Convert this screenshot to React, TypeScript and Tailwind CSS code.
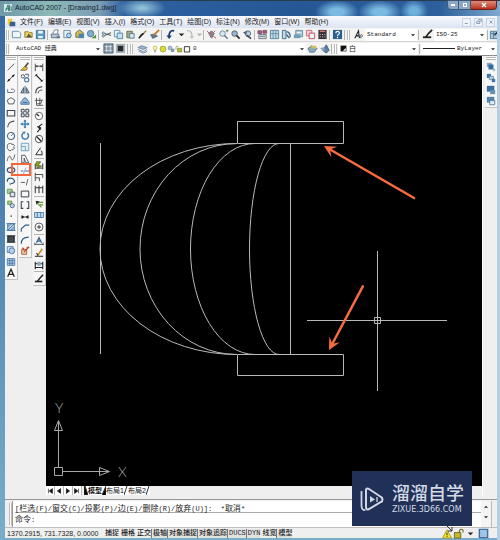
import type { ReactNode } from "react";
import clsx from "clsx";

const BLUE = "#3f74a8";
const DARK = "#3c4650";
const GREEN = "#5f9a2c";
const YELLOW = "#e2c02c";

// 12x12 glyphs, strokes are inherited from <Icon>
const GLYPHS: Record<string, ReactNode> = {
  // standard
  new: <path d="M1.5 2.5h7l2 2v5h-9z" fill="#eef6fb" stroke="#5d93ac" />,
  open: <><path d="M2 3h4l1 1h3v5H2z" fill="#efd35a" stroke="#8b7a3a" /><path d="M4 9l2-4 4 4z" fill="#4c5b4a" stroke="none" /></>,
  save: <><path d="M1.5 1.5h9v9h-9z" fill="#5a9bc8" stroke="#3c6f98" /><path d="M3.5 2h5v3h-5zM3.5 7.500h5V10h-5z" fill="#edf4fa" stroke="none" /></>,
  plot: <><path d="M3 5L5 1h4L8 5" fill="#fff" stroke="#708090" /><path d="M1.500 5.500h8v4h-8z" fill="#b8c6d2" stroke="#5c7288" /><path d="M7 8h4v2H7z" fill="#607990" stroke="none" /></>,
  preview: <><path d="M2 1.500h7v8H2z" fill="#e3f0f8" stroke="#668ca8" /><circle cx="7.500" cy="7" r="2.500" fill="#b8d8ea" stroke="#43749c" /></>,
  publish: <><path d="M2 4l4-3 4 3v5H2z" fill="#d8bd4c" stroke="#6d6c4c" /><path d="M5 5h6v5H5z" fill="#4c86ad" stroke="none" /></>,
  globe: <><circle cx="5" cy="5" r="3.500" fill="#7daecb" stroke="#487899" /><path d="M6 10l5-4v4z" fill="#4d9038" stroke="none" /></>,
  cut: <><path d="M11 4L4 7M11 7L4 5" stroke={DARK} /><circle cx="2.500" cy="4.500" r="1.200" stroke="#53708a" /><circle cx="2.500" cy="7.500" r="1.200" stroke="#53708a" /></>,
  copyDoc: <><path d="M1.500 1.500h6v7h-6z" fill="#e8f4fa" stroke="#5c91ae" /><path d="M4.500 4.500h6v6h-6z" fill="#c9e1f0" stroke="#4d83a4" /></>,
  paste: <><path d="M2 2.500h6v7H2z" fill="#9fae8e" stroke="#64714c" /><path d="M5 5h5v5H5z" fill="#d8e6ef" stroke="#5c7b92" /></>,
  match: <><path d="M10 2L6 6" stroke="#8e8464" strokeWidth="1.500" /><path d="M7 5L2 10l3-4z" fill="#222" stroke="#222" strokeWidth="1.500" /></>,
  block: <><path d="M1 6l5-1 4 3-6 3z" fill="#587592" stroke="none" /><path d="M11 1L5 7" stroke="#c67b29" strokeWidth="2" /></>,
  undo: <><path d="M10 2C6 1 4 4 4.500 9" stroke="#1f3e75" strokeWidth="2" /><path d="M1.500 7h6l-3 4z" fill="#1f3e75" stroke="none" /></>,
  redo: <><path d="M2 2c4-1 6 2 5.500 7" stroke="#bcc1c8" strokeWidth="1.500" /><path d="M5 8h5l-2.500 3z" fill="#bcc1c8" stroke="none" /></>,
  pan: <><path d="M3 5l3-3 3 3-3 5z" fill="#9a7f84" stroke="#6a6f88" /><path d="M1 2l3 3M8 8l3 2M10 2L8 4" stroke="#b9485a" /></>,
  zoomRt: <><circle cx="5" cy="5" r="3" fill="#d7e8f1" stroke="#71899d" /><path d="M7 7l3.500 3.500" stroke="#556b80" strokeWidth="1.500" /><path d="M8.500 2h3M10 .5v3" stroke="#5c7f4c" /></>,
  zoomWin: <><circle cx="5" cy="5" r="3" fill="#9fb6c8" stroke="#4c6278" /><path d="M7 7l3.500 3.500" stroke="#333" strokeWidth="2" /></>,
  zoomPrev: <><circle cx="6.500" cy="5" r="3" fill="#bccdd6" stroke="#54697d" /><path d="M5 7l5 3.500" stroke="#33404d" strokeWidth="1.500" /><path d="M1 4l4-2v4z" fill="#3d5c80" stroke="none" /></>,
  props: <><path d="M1 2h4v3H1zM6.500 1.500h4v3h-4z" fill="#b35272" stroke="#76506c" /><path d="M2 6h8v4.500H2z" fill="#e1d9d2" stroke="#697689" /><path d="M3 8h6" stroke="#5a7a96" /></>,
  center: <><path d="M1.500 1.500h9v9h-9z" fill="#c5dbe6" stroke="#4e819c" /><path d="M4.500 2v8M7.500 2v8M2 5h8" stroke="#5d92ab" /></>,
  tools: <><path d="M1.500 1.500h4v9h-4z" fill="#c7dbe7" stroke="#3b698c" /><path d="M6 3c3 0 4 2 4 6M6 6l3 4" stroke="#406a88" strokeWidth="1.500" /></>,
  sheet: <><path d="M3 1.500h7.500v7H3z" fill="#a7c6d4" stroke="#6a93a6" /><path d="M1 6h7v4H1z" fill="#6f9db5" stroke="none" /><path d="M4 4h5" stroke="#fff" /></>,
  markup: <><path d="M1.500 1.500h6v6h-6z" fill="#f7d6d9" stroke="#cf6475" /><path d="M4.500 4.500h6v6h-6z" fill="#f2f2f4" stroke="#c04c62" /></>,
  calc: <><path d="M1.500 1h9v10h-9z" fill="#3b3035" stroke="none" /><path d="M3 2.500h6" stroke="#cf7a78" strokeWidth="1.500" /><path d="M3 6h6M3 8.500h6" stroke="#e0dcdc" strokeDasharray="1 1.500" /></>,
  help: <><path d="M1 1h10v10H1z" fill="#2a6190" stroke="none" /><path d="M4.200 4.500C4.200 2 8 2 8 4.300 8 6 6 5.700 6 7.500M6 8.500V10" stroke="#fff" strokeWidth="1.300" /></>,
  textStyle: <><path d="M2 10L6 2l1 8M3.500 7.500H7" stroke="#222" strokeWidth="1.200" /><path d="M8 8c0-3 3-2 2 0s-3 2-2 0" stroke="#39526f" /></>,
  dimStyle: <><path d="M1 9h9" stroke="#222" strokeWidth="2" /><path d="M11 1L7 5 4 9" stroke="#222" strokeWidth="1.800" /></>,
  tableStyle: <><path d="M1.500 2.500h9v8h-9z" fill="#aac7dd" stroke="#4e7da0" /><path d="M2 5h8M5 3v7" stroke="#4e7da0" /><path d="M11 1L6 7" stroke="#333" strokeWidth="1.500" /></>,
  // workspace and layers
  workspace: <><path d="M1 1h10v10H1z" fill="#8295a6" stroke="#51667a" /><path d="M2 4h8M2 8h8M4 2v8M8 2v8" stroke="#cfd9e2" /></>,
  wsSave: <><path d="M1 1h10v10H1z" fill="#aab3ba" stroke="none" /><path d="M3 3h6v6H3z" fill="#26292c" stroke="none" /></>,
  layers: <><path d="M1 5l4-2 6 2-4 2z" fill="#9db5ca" stroke="#6c8aa6" /><path d="M1 7l6 2.500L11 7M2 9l5 2 4-2" stroke="#6788a8" /></>,
  bulb: <><circle cx="6" cy="4.500" r="3" fill="#fdf5a2" stroke="#b2a658" /><path d="M5 8h2v3H5z" fill="#7a7a70" stroke="none" /></>,
  sun: <circle cx="6" cy="6" r="4.500" fill="#d9dc35" stroke="#8b8f2e" />,
  freeze: <><circle cx="4.500" cy="4.500" r="3" fill="#a9bfd0" stroke="#6f8ba2" /><path d="M6 5.500h5v5H6z" fill="#7e9ab1" stroke="none" /></>,
  unlock: <><path d="M1.500 7V3.500C1.500 1 5 1 5 3.500" stroke="#95a03b" strokeWidth="1.300" /><path d="M4 5h6v5.500H4z" fill="#b7c23e" stroke="#798123" /></>,
  square: <path d="M2 2.500h8v8H2z" fill="#fff" stroke="#222" strokeWidth="1.300" />,
  layerCur: <><path d="M1 6l4-3 6 3-3 4H3z" fill="#87a9bf" stroke="#5a8098" /><path d="M4 3h6v3H5z" fill="#cdbf5a" stroke="none" /></>,
  layerPrev: <><path d="M4 8l4-6 3 6-3 3z" fill="#5f80a5" stroke="#39587c" /><path d="M1 6l5-2v5z" fill="#85a5c1" stroke="none" /></>,
  bw: <><path d="M1 1h10v10H1z" fill="#111" stroke="none" /><path d="M5 10l5-5v5z" fill="#fff" stroke="none" /></>,
  // draw
  line: <path d="M2 10L10 2" stroke={DARK} />,
  xline: <><path d="M1.500 10.500l9-9" stroke={DARK} /><path d="M2.500 9.500l2-2M7.500 4.500l2-2" stroke="#111" strokeWidth="2" /></>,
  pline: <path d="M2 9h6c3 0 3-4 0-4H6M2 5v4" stroke="#46627e" />,
  polygon: <path d="M6 2l4.500 3L9 9.500H3L1.500 5z" stroke={DARK} />,
  rect: <path d="M1.500 3h9v6.500h-9z" stroke={DARK} strokeWidth="1.300" />,
  arc: <path d="M2 10C2 5 6 2.500 10 2.500" stroke={DARK} strokeWidth="1.300" />,
  circle: <><circle cx="6" cy="6" r="4.200" stroke="#44668a" strokeWidth="1.300" /><path d="M6 6l3-3" stroke="#44668a" /></>,
  cloud: <path d="M4 2c2-1 3 0 3 1 3-1 4 2 2 3 2 2 0 4-2 3-1 2-4 2-4 0-2-1-2-3-1-4-1-1 0-3 2-3z" stroke={DARK} />,
  spline: <path d="M1.500 9.500C3 1 6 4 6 6s3 5 4.500-4" stroke={DARK} />,
  ellipse: <ellipse cx="6" cy="6" rx="4.500" ry="3" stroke="#2f5680" strokeWidth="1.500" />,
  ellipseArc: <><path d="M2 7C0 3 6 1 9 4s0 5-3 5" stroke="#315b82" strokeWidth="1.500" /><path d="M5 8v3" stroke="#315b82" /></>,
  insert: <><path d="M1.500 1.500h6v5h-6z" fill="#a9c7b8" stroke={GREEN} /><path d="M5 5h5.500v5.500H5z" fill="#d6e4ea" stroke={DARK} /></>,
  makeBlock: <><path d="M2 2.500h5v4H2z" fill="#9ec3a1" stroke={GREEN} /><circle cx="7.500" cy="8" r="2.500" fill="#c9d9e4" stroke="#3c5f80" /></>,
  point: <path d="M5.500 5.500h1.500V7H5.500z" fill="#222" stroke="none" />,
  hatch: <><path d="M2 2h8v8H2z" fill="#b7d0e4" stroke={BLUE} /><path d="M2 6l4-4M2 10l8-8M6 10l4-4M.5 2h11M.5 10h11" stroke={BLUE} /></>,
  gradient: <><path d="M2 2h8v8H2z" fill="#31383e" stroke="#20262b" /><path d="M.5 2h11M.5 10h11M4 5h4v3H4z" stroke="#59626a" /></>,
  region: <><path d="M1.500 2h7v7h-7z" fill="#dbe8f2" stroke={BLUE} /><circle cx="7" cy="7" r="3.500" fill="#b4cde0" stroke={BLUE} /></>,
  table: <><path d="M1.500 2h9v8h-9z" fill="#bdd7ea" stroke={BLUE} /><path d="M2 4.500h8M2 7.500h8M4.500 2v8M7.500 2v8" stroke={BLUE} /></>,
  mtext: <path d="M2 10.500L6 1.500l4 9M3.500 7.500h5" stroke="#222" strokeWidth="1.500" />,
  // modify
  erase: <><path d="M1 10h6l2-3-3-2z" fill={YELLOW} stroke="#74683d" /><path d="M6 6l4-5" stroke="#5a4630" strokeWidth="2" /></>,
  copy: <><circle cx="3.500" cy="4" r="2" stroke={DARK} /><circle cx="8" cy="8" r="2.500" stroke={BLUE} strokeWidth="1.300" /><path d="M6 1.500h4v3" stroke={DARK} /></>,
  mirror: <><path d="M4.500 3v6.500H1zM7.500 3v6.500H11z" stroke={DARK} fill="#a6bac9" /><path d="M6 1v10" stroke={BLUE} /></>,
  offset: <><path d="M1 10V7c2 0 2-5 5-5s3 5 5 5v3z" fill="#93b7d3" stroke={BLUE} /><path d="M3 8h6" stroke="#315b82" /></>,
  array: <path d="M1.500 1.500h3.500v3.500H1.500zM7 1.500h3.500v3.500H7zM1.500 7h3.500v3.500H1.500zM7 7h3.500v3.500H7z" stroke={DARK} strokeWidth="1.200" />,
  move: <><path d="M6 2v8M2 6h8" stroke="#2f74b1" strokeWidth="1.500" /><path d="M6 .5L8 3H4zM6 11.500L8 9H4zM.5 6L3 4v4zM11.500 6L9 4v4z" fill="#2f74b1" stroke="none" /></>,
  rotate: <><path d="M4 2.500a4 4 0 1 0 4.500 0" stroke="#3c79ab" strokeWidth="1.700" /><path d="M3 1l4-.5L5 4z" fill="#3c79ab" stroke="none" /></>,
  scale: <><path d="M1.500 1.500h9v9h-9z" fill="#e4eef5" stroke="#6796b8" /><path d="M1.500 5.500h5v5" stroke="#6796b8" /></>,
  stretch: <path d="M2 1.500h4l4.500 9H7L5 5v5.500H2z" stroke={DARK} />,
  trim: <><path d="M1 6h3M6 6h5" stroke={BLUE} strokeWidth="1.300" /><path d="M7 2L4 10" stroke="#7ea4c4" /></>,
  extend: <path d="M1 6.500h5M9.500 2.500L7.500 10" stroke={DARK} />,
  breakPt: <path d="M1.500 2.500h9v7h-9z" stroke={DARK} strokeWidth="1.200" />,
  break: <path d="M4 2H1.500v8H4M8 2h2.500v8H8" stroke={DARK} strokeWidth="1.300" />,
  join: <><path d="M1 6h10" stroke={DARK} /><path d="M2 3.500L5.500 6 2 8.500zM10 3.500L6.500 6 10 8.500z" fill="#222" stroke="none" /></>,
  chamfer: <path d="M1.500 10.500V7l5-4.500H11" stroke="#345f87" strokeWidth="1.300" />,
  fillet: <path d="M1.500 10.500C1.500 5 4 2.500 10.500 2.500" stroke="#345f87" strokeWidth="1.300" />,
  explode: <><path d="M2 4h6v6H2z" fill="#eac6a3" stroke="#ab5632" /><path d="M5 7l5-5M8 2.500l3-1.500M3 2l2 3" stroke="#c23a22" strokeWidth="1.500" /></>,
  // dimension
  dimLinear: <><path d="M1.500 2v9M10.500 2v9M2 5h8" stroke="#333" /><path d="M2 5l2-1.500v3zM10 5L8 3.500v3z" fill="#222" stroke="none" /></>,
  dimAligned: <><path d="M2 2l8 8" stroke="#222" strokeWidth="1.500" /><path d="M1 4l3-3M8 11l3-3" stroke="#333" /></>,
  dimArc: <><path d="M2 10C2 4 5 2 10 2" stroke="#333" strokeWidth="1.300" /><path d="M5 10c0-3 2-4 5-4" stroke="#333" /></>,
  dimOrd: <path d="M3 1v9h8M1 4h9M7 1v9M4 8h4l2-5" stroke="#444" />,
  dimRadius: <><circle cx="6" cy="6" r="4.500" stroke="#555" /><path d="M6 6L3 3.500" stroke="#222" strokeWidth="1.500" /></>,
  dimJog: <path d="M10 1L6 4l2 2-4 5M4 4l4 4" stroke="#222" strokeWidth="1.300" />,
  dimDia: <><circle cx="6" cy="6" r="4.500" stroke="#444" /><path d="M3 3l6 6" stroke="#222" strokeWidth="1.500" /></>,
  dimAng: <path d="M10.500 10.500H2L8 2M8 5c1.500 1 2 3 1.500 5" stroke="#333" strokeWidth="1.200" />,
  dimQuick: <><path d="M1.500 10V3M10.500 10V3M2 8.500h8" stroke="#333" strokeWidth="1.200" /><path d="M3 1h5L5 5l4 1-5 3 1-3H2z" fill="#9ba326" stroke="#566b24" /></>,
  dimBase: <path d="M1.500 1v10M1.500 3h9v4M1.500 7h5v4" stroke="#333" />,
  dimCont: <path d="M1.500 2v9M6 2v9M10.500 2v9M1.500 4.500h9" stroke="#333" strokeWidth="1.200" />,
  leader: <><path d="M2 2l5 1-4 4z" fill="#222" stroke="none" /><path d="M4 5l5 5M6 4h5M7 7h4" stroke={GREEN} strokeWidth="1.500" /></>,
  tolerance: <><path d="M.5 3h11v6H.5z" fill="#c2d9ea" stroke={BLUE} /><path d="M4 3v6M8 3v6" stroke={BLUE} /></>,
  centerMark: <><circle cx="6" cy="6" r="4.800" stroke="#444" /><path d="M3.500 6h5M6 3.500v5" stroke="#222" /></>,
  dimEdit: <><path d="M3 8l3-6 3 6M4 6h4" stroke="#2d5d8c" strokeWidth="1.500" /><path d="M1 10h10M1 8v3M11 8v3" stroke="#333" /></>,
  dimTedit: <><path d="M10 1L5 8" stroke="#c2912d" strokeWidth="2" /><path d="M1 10h10M3 6l2 3" stroke="#222" strokeWidth="1.300" /></>,
  dimUpdate: <><path d="M1.500 2v9M10.500 2v9M2 4.500h8M2 9h8" stroke="#222" strokeWidth="1.300" /><path d="M4 2h4v5H4z" fill="#8ba8c0" stroke="none" /></>,
  // draw order
  front: <><path d="M1 1h6v5H1z" fill="#8aa0b4" stroke="none" /><path d="M3 3h6v6H3z" fill="#2f6ba4" stroke="none" /><path d="M8 8h3v3H8z" fill="#a9b8c6" stroke="none" /></>,
  back: <><path d="M1 1h5v5H1z" fill="#3e77ab" stroke="none" /><path d="M4 4h5v4H4z" fill="#b8cad9" stroke="#6c8aa6" /><path d="M7 7h4v4H7z" fill="#3e77ab" stroke="none" /></>,
  above: <><path d="M1 1h9v7H1z" fill="#3a6f9f" stroke="none" /><path d="M5 6h6v5H5z" fill="#6690b3" stroke="none" /></>,
  under: <><path d="M1 1h9v7H1z" fill="#5583ad" stroke="none" /><path d="M4.500 5.500h6v5h-6z" fill="#e5edf4" stroke="#4c759b" /></>,
  // tray
  warn: <><path d="M5.500 2l5 9h-10z" fill="#f0e22e" stroke="#a59a2b" /><path d="M5.500 5v3M5.500 9v1" stroke="#222" /></>,
  lock: <><path d="M7 6V3c0-2 4-2 4 0v2" stroke="#77712f" strokeWidth="1.300" /><path d="M1.500 5h7v6h-7z" fill="#c4b72c" stroke="#6d661d" /></>,
  clean: <path d="M1.500 1.500h9v9h-9z" fill="#9fc4e6" stroke="#3f6f9f" strokeWidth="1.500" />,
  down: <path d="M3 5h6L6 8z" fill="#222" stroke="none" />,
};

const MENUS = [
  "文件(F)", "编辑(E)", "视图(V)", "插入(I)", "格式(O)", "工具(T)",
  "绘图(D)", "标注(N)", "修改(M)", "窗口(W)", "帮助(H)",
];

const STANDARD = [
  ["new", "open", "save"],
  ["plot", "preview", "publish", "globe"],
  ["cut", "copyDoc", "paste", "match", "block"],
];
const VIEW = [
  ["pan", "zoomRt", "zoomWin", "zoomPrev"],
  ["props", "center", "tools", "sheet", "markup", "calc"],
  ["help"],
];

const DRAW = [
  "line", "xline", "pline", "polygon", "rect", "arc", "circle", "cloud", "spline", "ellipse",
  "ellipseArc", "insert", "makeBlock", "point", "hatch", "gradient", "region", "table", "mtext",
];
const MODIFY = [
  "erase", "copy", "mirror", "offset", "array", "move", "rotate", "scale", "stretch", "trim",
  "extend", "breakPt", "break", "join", "chamfer", "fillet", "explode",
];
const DIMENSION = [
  "dimLinear", "dimAligned", "dimArc", "dimOrd", "-",
  "dimRadius", "dimJog", "dimDia", "dimAng", "-",
  "dimQuick", "dimBase", "dimCont", "-",
  "leader", "tolerance", "centerMark", "-",
  "dimEdit", "dimTedit", "dimUpdate", "-", "dimStyle",
];

const MODES = [
  { label: "捕捉", on: false },
  { label: "栅格", on: false },
  { label: "正交", on: false },
  { label: "极轴", on: true },
  { label: "对象捕捉", on: true },
  { label: "对象追踪", on: true },
  { label: "DUCS", on: true },
  { label: "DYN", on: true },
  { label: "线宽", on: false },
  { label: "模型", on: true },
];

function Icon({ name, className = "size-[11px]" }: { name: string; className?: string }) {
  return (
    <svg viewBox="0 0 12 12" fill="none" strokeWidth="1" className={clsx("shrink-0", className)} aria-hidden="true">
      {GLYPHS[name]}
    </svg>
  );
}

function Tool({ name, className = "w-3" }: { name: string; className?: string }) {
  return (
    <button type="button" aria-label={name} className={clsx("flex shrink-0 items-center justify-center", className)}>
      <Icon name={name} />
    </button>
  );
}

function Grip() {
  return <span className="mx-px h-2.5 w-[3px] shrink-0 border-x border-[#bdbdbd] bg-white" />;
}

function Sep() {
  return <span className="mx-px h-2.5 w-px shrink-0 bg-[#b4b4b4]" />;
}

function Groups({ groups }: { groups: string[][] }) {
  return groups.map((group, i) => (
    <div key={i} className="flex items-center">
      {group.map((name) => <Tool key={name} name={name} />)}
      <Sep />
    </div>
  ));
}

type ComboProps = { label: string; value: string; className: string; mono?: boolean; children?: ReactNode };

function Combo({ label, value, className, mono = true, children }: ComboProps) {
  return (
    <label className={clsx("flex h-3 items-center overflow-hidden bg-white", className)}>
      {children}
      <select
        aria-label={label}
        className={clsx(
          "min-w-0 flex-1 appearance-none bg-transparent pl-0.5 leading-3 text-[#222] outline-none",
          mono ? "font-['Liberation_Mono','Noto_Sans_CJK_SC',monospace] text-[6px]" : "text-[7px]"
        )}
      >
        <option>{value}</option>
      </select>
      <Icon name="down" className="size-2" />
    </label>
  );
}

function TitleBar() {
  return (
    <header className="flex h-4 items-center gap-[3px] bg-[radial-gradient(ellipse_24px_10px_at_142px_8px,#8fc0d6_10%,transparent),radial-gradient(ellipse_22px_12px_at_337px_12px,#7ab9e2_30%,transparent),radial-gradient(ellipse_22px_12px_at_380px_12px,#7ab9e2_30%,transparent),radial-gradient(ellipse_14px_12px_at_414px_11px,#6eb0dc_30%,transparent),linear-gradient(90deg,#6f98a8_0,#8db9b8_50px,#7b9db4_100px,#2d619f_125px,#255795_300px,#2c5f9b_440px,#7fa9d0)] pr-[3px] pl-1 shadow-[inset_0_1px_0_#2b3b4d]">
      <svg viewBox="0 0 10 10" className="size-2 shrink-0" aria-hidden="true">
        <path d="M0 0h10v10H0z" fill="#d7e9e6" />
        <path d="M2 9L5 1l1 8M2 6h4M7 1v8M9 3v6" stroke="#28736f" fill="none" strokeWidth="1.200" />
      </svg>
      <h1 className="flex-1 truncate text-[7px] leading-4 text-[#10202e]">AutoCAD 2007 - [Drawing1.dwg]</h1>
      <div className="flex h-2.5 self-start text-white">
        <button type="button" aria-label="最小化" className="flex w-3 items-center justify-center rounded-bl border border-[#3c5876] bg-[#8ba9c6]">
          <span className="h-0.5 w-1 bg-white" />
        </button>
        <button type="button" aria-label="最大化" className="flex w-3 items-center justify-center border-y border-r border-[#3c5876] bg-[#8ba9c6]">
          <span className="size-1 border border-white" />
        </button>
        <button type="button" aria-label="关闭" className="flex w-[26px] items-center justify-center rounded-br border-y border-r border-[#6b2018] bg-linear-to-b from-[#d98a7a] to-[#b92c18]">
          <svg viewBox="0 0 6 6" className="size-1.5"><path d="M1 1l4 4M5 1L1 5" stroke="#fff" strokeWidth="1.300" /></svg>
        </button>
      </div>
    </header>
  );
}

function MenuBar() {
  return (
    <nav className="flex h-3 items-center bg-linear-to-b from-[#f7f9fd] to-[#dde4f2] pl-0.5">
      <svg viewBox="0 0 12 12" className="mr-1 size-[9px]" aria-hidden="true">
        <path d="M1 1h6v8H1z" fill="#f0c93c" />
        <path d="M4 5h7v6H3z" fill="#3a5f8c" />
      </svg>
      <div className="flex flex-1 gap-[5px]">
        {MENUS.map((label) => (
          <button key={label} type="button" className="text-[7px] leading-3 whitespace-nowrap text-[#1c1c1c]">
            {label}
          </button>
        ))}
      </div>
      <div className="flex gap-[3px] pr-0.5">
        {["M1 6h4", "M1 3h4v3H1zM3 1h4v3", "M2 2l4 4M6 2L2 6"].map((d) => (
          <button key={d} type="button" aria-label="文档窗口" className="flex size-[9px] items-center justify-center border border-[#c6d2e4] bg-[#eef3fa]">
            <svg viewBox="0 0 8 8" className="size-1.5" fill="none" stroke="#6a7f9c"><path d={d} /></svg>
          </button>
        ))}
      </div>
    </nav>
  );
}

function StandardBar() {
  return (
    <div className="flex h-3.5 items-center overflow-hidden border-b border-[#d5d5d5] bg-[#f3f3f1]">
      <Grip />
      <Groups groups={STANDARD} />
      <Tool name="undo" className="w-[15px]" />
      <Tool name="down" className="w-1.5" />
      <Tool name="redo" />
      <Tool name="down" className="w-1.5 opacity-30" />
      <Sep />
      <Groups groups={VIEW} />
      <Grip />
      <Tool name="textStyle" className="w-3.5" />
      <Combo label="文字样式" value="Standard" className="w-13 shrink-0" />
      <Sep />
      <Tool name="dimStyle" className="w-3.5" />
      <Combo label="标注样式" value="ISO-25" className="min-w-13 flex-1" />
      <Sep />
      <Tool name="tableStyle" className="w-2.5" />
    </div>
  );
}

function LayerBar() {
  return (
    <div className="flex h-3.5 items-center overflow-hidden border-b border-[#8d8d8d] bg-[#f3f3f1]">
      <Grip />
      <Combo label="工作空间" value="AutoCAD 经典" className="w-23 shrink-0 pl-1" />
      <Tool name="workspace" />
      <Tool name="wsSave" />
      <Sep />
      <Grip />
      <Tool name="layers" className="w-4" />
      <Combo label="图层" value="0" className="w-39 shrink-0 pl-px">
        {["bulb", "sun", "freeze", "unlock", "square"].map((name) => (
          <Icon key={name} name={name} className="size-2" />
        ))}
      </Combo>
      <Tool name="layerCur" />
      <Tool name="layerPrev" />
      <Sep />
      <Grip />
      <Combo label="颜色" value="白" className="w-20 shrink-0 pl-0.5" mono={false}>
        <Icon name="bw" className="size-[7px]" />
      </Combo>
      <Sep />
      <Combo label="线型" value="ByLayer" className="min-w-0 flex-1 pl-0.5">
        <span className="h-px w-8 shrink-0 bg-[#222]" />
      </Combo>
    </div>
  );
}

function Palette({ tools, className }: { tools: string[]; className: string }) {
  return (
    <div className={clsx("flex w-[13px] flex-col items-stretch border-r border-b border-[#c2c2c2] bg-[#f7f7f7]", className)}>
      <span className="m-px h-[3px] border-y border-[#b5b5b5] bg-white" />
      {tools.map((name, i) =>
        name === "-" ? (
          <span key={i} className="mx-px my-px h-px bg-[#b5b5b5]" />
        ) : (
          <button key={i} type="button" aria-label={name} className="relative flex min-h-0 flex-1 items-center justify-center">
            <Icon name={name} className="size-2.5" />
            {name === "trim" && <span className="absolute -top-0.5 right-0 bottom-0 -left-2 border-2 border-[#f5663a]" />}
          </button>
        )
      )}
    </div>
  );
}

function Arrow({ x, y, angle, length }: { x: number; y: number; angle: number; length: number }) {
  return (
    <g transform={`translate(${x} ${y}) rotate(${angle})`}>
      <path d={`M4 0H${length}`} stroke="#f96c40" strokeWidth="2.500" strokeLinecap="round" />
      <path d="M0 0L12-6 7 0l5 6z" fill="#f96c40" />
    </g>
  );
}

function Drawing() {
  return (
    <svg viewBox="0 0 436 430" className="block w-full" fill="none" role="img" aria-label="Drawing1">
      <g stroke="#b9b9b9">
        <path d="M54.500 87v211" />
        <path d="M191.500 65.500h106v22h-106zM191.500 298.500h106v21h-106z" />
        <path d="M244.500 87v211" />
        <path d="M191 87.500A137 105.500 0 0 0 191 298.500" />
        <path d="M191 87.500A97 105.500 0 0 0 191 298.500" />
        <path d="M209 87.500A64.500 105.500 0 0 0 209 298.500" />
        <path d="M233 87.500A29.500 105.500 0 0 0 233 298.500" />
      </g>
      {/* crosshair */}
      <g stroke="#b5bab5">
        <path d="M261 264.500h140M331.500 195v140" />
        <path d="M328.500 261.500h6v6h-6z" />
      </g>
      {/* UCS icon */}
      <g stroke="#a8a8a8">
        <path d="M8.500 411.500h8v8h-8zM12.500 411v-37M17 415.500h37" />
        <path d="M12.500 364.500l4 10h-8zM12.500 365v9M63.500 415.500l-10 4v-8zM63 415.500h-9" />
      </g>
      <g fill="#a8a8a8" className="font-['Lato',sans-serif] text-[14px] font-light">
        <text x="9" y="357">Y</text>
        <text x="72" y="421">X</text>
      </g>
      <Arrow x={278} y={90} angle={30} length={104} />
      <Arrow x={283} y={294} angle={-62} length={72} />
    </svg>
  );
}

function Slant({ d }: { d: string }) {
  return (
    <svg viewBox="0 0 4 9" className="h-full w-1" aria-hidden="true">
      <path d={d} fill="#000" stroke="#333" />
    </svg>
  );
}

function LayoutTabs() {
  return (
    <div className="flex h-[9px] items-center bg-[#efefef] text-[7px] leading-[9px] text-[#111]">
      {["M3 2v6M8 2L4 5l4 3z", "M7 2L3 5l4 3z", "M3 2l4 3-4 3z", "M7 2v6M2 2l4 3-4 3z"].map((d) => (
        <button key={d} type="button" aria-label="布局导航" className="flex h-full w-[9px] items-center justify-center border-r border-[#b8b8b8] bg-white">
          <svg viewBox="0 0 10 10" className="size-2" fill="#111" stroke="#111" strokeWidth=".8"><path d={d} /></svg>
        </button>
      ))}
      <div role="tablist" className="ml-0.5 flex h-full bg-white">
        <Slant d="M0 0h1l3 9H0z" />
        <button type="button" role="tab" aria-selected="true" className="font-bold">模型</button>
        <Slant d="M0 9L4 0v9" />
        {["布局1", "布局2"].map((name) => (
          <div key={name} className="flex h-full">
            <button type="button" role="tab" aria-selected="false">{name}</button>
            <Slant d="M0 9L3 0" />
          </div>
        ))}
      </div>
    </div>
  );
}

// Latin runs are set one size below the Chinese ones
function CommandText({ text }: { text: string }) {
  return text.split(/([\u4e00-\u9fff]+)/).map((run, i) => (
    <span key={i} className={i % 2 ? "text-[8px]" : "text-[7px]"}>{run}</span>
  ));
}

function CommandLine() {
  return (
    <section className="mt-1 flex h-7 border-t border-[#999] bg-[#efefef] pt-px">
      <span className="my-0.5 ml-1 w-[3px] border-x border-[#bcbcbc] bg-white" />
      <div className="flex-1 border-l border-[#999] bg-white pl-0.5 font-['Liberation_Mono','Noto_Sans_CJK_SC',monospace] text-[#222]">
        <p className="h-3 border-b border-[#aaa] leading-3 whitespace-pre">
          <CommandText text="[栏选(F)/窗交(C)/投影(P)/边(E)/删除(R)/放弃(U)]:  *取消*" />
        </p>
        <label className="flex h-3.5 items-center leading-3">
          <CommandText text="命令:" />
          <input className="min-w-0 flex-1 text-[7px] outline-none" />
        </label>
      </div>
      <div className="flex w-2.5 flex-col items-center gap-0.5 bg-[#f4f4f4] pt-0.5">
        <Icon name="down" className="size-2 rotate-180" />
        <Icon name="down" className="size-2" />
      </div>
      <span className="w-1.5 border-l border-[#bbb]" />
    </section>
  );
}

function StatusBar() {
  return (
    <footer className="flex h-[11px] items-center border-t border-[#bdbdbd] bg-[#efefef] pl-0.5 text-[7px] leading-[9px] text-[#1c1c1c]">
      <output className="w-24 shrink-0 whitespace-nowrap">1370.2915, 731.7328, 0.0000</output>
      <div className="flex flex-1 font-['Liberation_Mono','Noto_Sans_CJK_SC',monospace]">
        {MODES.map(({ label, on }) => (
          <button
            key={label}
            type="button"
            aria-pressed={on}
            className={clsx(
              "border-l pl-px font-medium whitespace-nowrap",
              on ? "border-[#777] bg-[#e2e2e2]" : "border-transparent"
            )}
          >
            {label}
          </button>
        ))}
      </div>
      <div className="flex items-center gap-px pr-2">
        <Tool name="warn" className="w-2.5" />
        <Tool name="lock" className="w-2.5" />
        <Tool name="down" />
        <Tool name="clean" />
      </div>
    </footer>
  );
}

function Watermark() {
  return (
    <div className="absolute right-7 bottom-3.5 flex h-[55px] w-30 items-center gap-2 bg-[#203057] pl-2 text-[#d3dae6]">
      <svg viewBox="0 0 24 26" className="h-[26px] w-6 shrink-0" fill="none" stroke="#cfd6e4" aria-hidden="true">
        <path d="M6 4v17c0 2 1 3 3 2l12-7c2-1 2-4 0-5L9 3C7 2 6 3 6 4z" strokeWidth="2" />
        <path d="M1.500 5v15c0 3 2 4.500 4 4" strokeWidth="1.800" />
        <path d="M10 10l5 3.500-5 3z" fill="#cfd6e4" stroke="none" />
        <path d="M17 11v5" strokeWidth="1.300" />
      </svg>
      <div>
        <div className="text-[18px] leading-[22px] font-medium">溜溜自学</div>
        <div className="font-['DejaVu_Sans',sans-serif] text-[8px] leading-[10px]">ZIXUE.3D66.COM</div>
      </div>
    </div>
  );
}

export default function App() {
  return (
    <div className="relative flex min-h-screen flex-col bg-[#6aa3c4] font-['Liberation_Sans','Noto_Sans_CJK_SC',sans-serif]">
      <TitleBar />
      <div className="flex flex-1 flex-col border-r-[3px] border-[#b4cfe5] bg-linear-to-b from-[#39699f] to-[#79aeca] pb-0.5 pl-[5px]">
        <MenuBar />
        <StandardBar />
        <LayerBar />
        <main className="flex flex-1 items-stretch bg-[#efefef]">
          <div className="flex w-[41px] shrink-0 items-start gap-px">
            <Palette tools={DRAW} className="h-56" />
            <Palette tools={MODIFY} className="h-[202px]" />
            <Palette tools={DIMENSION} className="h-[230px]" />
          </div>
          <div className="min-w-0 flex-1 bg-black">
            <Drawing />
            <LayoutTabs />
          </div>
          <div className="w-[15px] shrink-0 border-l border-white pl-0.5">
            <Palette tools={["front", "back", "above", "under"]} className="h-[52px]" />
          </div>
        </main>
        <div className="bg-[#efefef]">
          <CommandLine />
          <StatusBar />
        </div>
      </div>
      <Watermark />
      <svg viewBox="0 0 8 8" className="absolute right-[47px] bottom-2 size-2" aria-hidden="true">
        <path d="M0 0l7 7V3M7 7H3" stroke="#333" fill="none" />
      </svg>
    </div>
  );
}
